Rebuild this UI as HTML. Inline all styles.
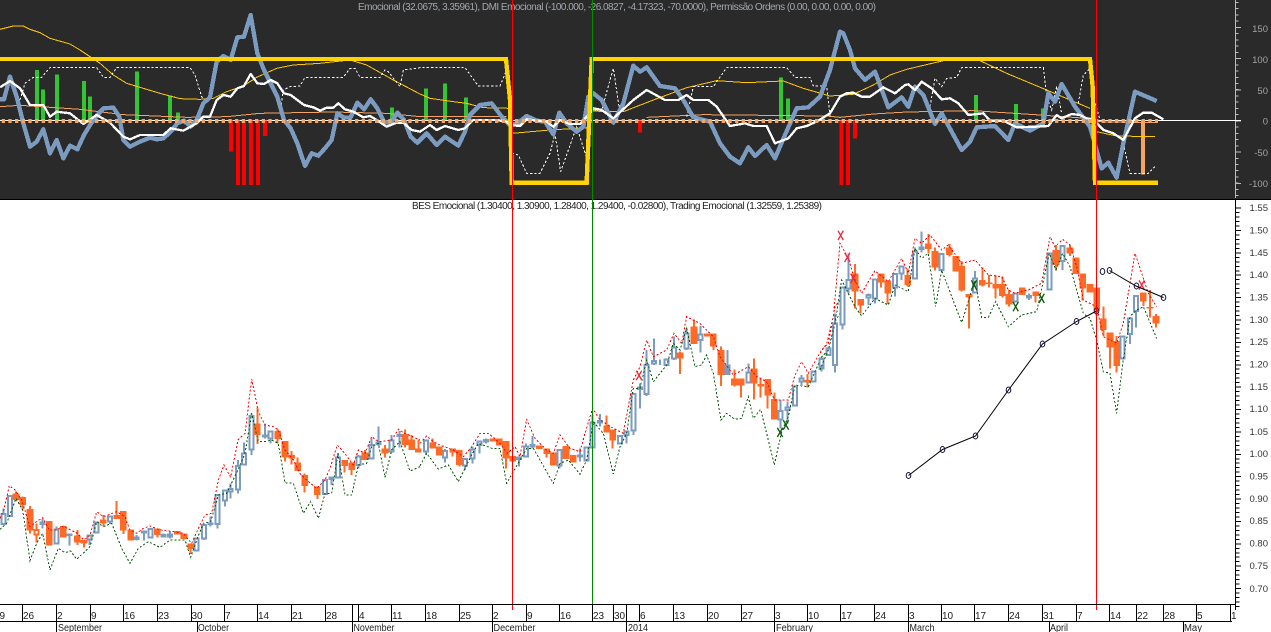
<!DOCTYPE html>
<html><head><meta charset="utf-8"><title>Chart</title>
<style>
html,body{margin:0;padding:0;background:#fff;width:1271px;height:632px;overflow:hidden}
svg{display:block}
text{font-family:"Liberation Sans",sans-serif;font-size:10px}
path{shape-rendering:crispEdges}
.a text{fill:#a0a4a8;font-size:9.5px}
.l text{fill:#333;font-size:9.5px}
.b text{fill:#222}
.n{fill:none}
</style></head><body>
<svg width="1271" height="632" viewBox="0 0 1271 632" xmlns="http://www.w3.org/2000/svg">
<rect width="1271" height="632" fill="#fff"/>
<rect width="1271" height="199" fill="#2a2a2a"/>
<path d="M0 199.500H1271" stroke="#000" stroke-width="1"/>

<!-- upper axis -->
<path d="M1235.500 0V198" stroke="#bdbdbd"/>
<path d="M1237 2V198" stroke="#bdbdbd" stroke-width="3" stroke-dasharray="1 5.230"/>
<path d="M1238 27V190" stroke="#bdbdbd" stroke-width="6" stroke-dasharray="1 30.170"/>
<path d="M0 120.500H1241" stroke="#fff"/>
<g class="a" text-anchor="end">
<text x="1268" y="32">150</text><text x="1268" y="63">100</text><text x="1268" y="94">50</text><text x="1268" y="124.500">0</text><text x="1268" y="156">-50</text><text x="1268" y="187">-100</text>
</g>
<text x="358" y="10" textLength="518" lengthAdjust="spacing" fill="#a0a8b0">Emocional (32.0675, 3.35961), DMI Emocional (-100.000, -26.0827, -4.17323, -70.0000), Permissão Ordens (0.00, 0.00, 0.00, 0.00)</text>

<!-- upper bars / lines, coordinates at 3x -->
<g transform="scale(.33333)" class="n">
<path stroke="#33c433" stroke-width="11" d="M111 360V210M129 360V268M171 360V223M252 360V243M270 360V290M411 360V214M510 360V286M534 360V338M1176 360V322M1278 360V266M1335 360V250M1398 360V292M2343 360V232M2364 360V295M2928 360V285M3048 360V312M3129 360V325"/>
<path stroke="#ff0000" stroke-width="11" d="M693 362V455M714 362V555M732 362V555M753 362V555M774 362V555M795 362V408M1920 362V397M2524 362V555M2544 362V555M2565 362V415"/>
<path stroke="#f5a35e" stroke-width="12" d="M3429 360V523"/>
<path stroke="#f5a35e" stroke-width="3" d="M0 320L60 316L240 328L370 344L560 352L680 350L780 340L1000 336L1160 340L1260 350L1520 350M1940 352L2110 344L2480 348L2520 352L2620 342L2720 336L2920 332L3120 345L3260 355M3290 365L3470 368"/>
<path stroke="#ffc800" stroke-width="3" d="M0 88L40 78L70 78L90 88L120 98L150 115L210 132L240 150L270 170L300 190L340 225L380 250L420 262L480 280L540 296L600 298L640 295L680 275L730 258L770 232L830 205L880 195L960 190L1050 180L1100 195L1180 240L1260 282L1290 295L1360 305L1400 310L1450 323L1530 325M1537 400L1650 390L1765 383M1775 333L1830 335L1870 335L1960 300L2060 263L2150 242L2240 248L2350 243L2410 265L2490 288L2560 283L2620 255L2670 225L2720 208L2830 182L2940 182L3020 220L3140 270L3270 325M3290 395L3350 408L3465 410"/>
<path stroke="#fff" stroke-width="3" stroke-dasharray="7 6" d="M60 300L75 250L100 232L125 232L150 203L290 203L310 232L330 232L350 203L570 203L585 225L605 290L610 298M840 340L850 270L870 260L900 258L915 232L1030 232L1050 205L1065 205L1080 232L1140 232L1155 210L1165 215L1200 260L1210 210L1260 203L1395 203L1435 258L1500 258L1522 205L1530 300L1537 460L1555 465L1580 520L1620 520L1650 460L1665 400L1682 515L1730 380L1765 490M1770 330L1805 330L1840 205L1860 340M2060 350L2080 260L2140 260L2180 203L2360 203L2385 232L2430 232L2440 258L2480 258L2490 350M2790 320L2805 235L2825 260L2840 235L2870 232L2885 203L3130 203L3140 290L3155 330L3170 260L3185 340M3235 310L3250 225L3270 205L3280 290L3300 360M3370 430L3390 520L3445 520L3465 500"/>
<path stroke="#7b9bc0" stroke-width="13" stroke-linejoin="round" d="M0 298L12 298L30 230L50 290L70 370L90 440L110 425L130 388L150 460L170 420L190 475L210 437L232 448L252 405L272 372L292 345L310 325L340 323L358 350L370 420L390 440L420 425L450 413L470 418L490 415L512 395L532 370L552 362L572 380L590 360L610 310L630 292L650 185L670 168L692 180L712 112L732 110L752 45L772 160L792 210L812 250L832 290L852 360L872 385L892 430L915 498L935 460L955 467L975 445L995 420L1012 340L1032 353L1052 352L1072 308L1092 328L1112 298L1132 325L1152 365L1172 370L1192 338L1212 360L1232 410L1252 428L1280 400L1310 435L1335 410L1375 437L1395 395L1410 345L1440 315L1475 310L1505 350L1530 375L1550 372L1580 348L1610 362L1635 365L1660 403L1678 338L1700 370L1730 395L1750 380L1765 290L1780 280L1805 300L1840 368L1870 310L1900 197L1920 215L1940 202L1980 258L2025 265L2050 300L2080 352L2130 365L2160 430L2190 470L2220 490L2245 442L2265 468L2300 435L2325 475L2355 405L2390 325L2425 322L2460 290L2490 210L2520 95L2530 100L2550 150L2565 205L2595 240L2625 215L2665 322L2705 292L2725 320L2745 260L2770 285L2805 372L2825 340L2885 450L2910 425L2930 382L2985 378L3025 420L3045 370L3090 392L3130 370L3145 280L3165 305L3185 252L3225 320L3270 380L3305 505L3325 488L3350 533L3370 430L3405 275L3470 303"/>
<path stroke="#fff" stroke-width="7" stroke-linejoin="round" d="M0 262L30 243L60 265L90 315L130 315L150 350L170 335L210 340L250 372L290 345L330 368L370 410L390 418L420 405L490 405L512 385L550 392L590 370L610 350L630 350L650 300L670 285L692 290L712 265L732 258L752 222L772 250L792 252L812 240L832 250L852 280L872 285L912 315L940 322L960 332L980 323L1000 323L1015 310L1035 328L1060 335L1090 352L1110 348L1130 360L1160 380L1190 368L1210 368L1235 390L1260 395L1290 375L1310 390L1335 378L1375 390L1395 385L1420 360L1490 360L1520 365L1530 375L1560 378L1580 358L1640 365L1660 380L1680 360L1710 372L1740 372L1770 340L1780 325L1805 330L1840 355L1900 300L1940 270L1995 300L2035 300L2060 285L2080 300L2125 300L2150 320L2190 378L2235 370L2260 378L2300 378L2325 430L2365 415L2390 385L2420 378L2455 362L2490 340L2520 290L2540 280L2560 278L2585 290L2610 290L2650 262L2685 280L2715 255L2725 253L2745 270L2765 245L2795 265L2825 298L2850 295L2875 310L2905 345L2950 340L2970 362L3010 362L3050 382L3105 380L3145 378L3170 345L3185 355L3215 342L3240 345L3260 355L3280 358L3310 390L3340 400L3370 420L3405 355L3430 338L3455 338L3490 358"/>
<path stroke="#f7a55f" stroke-width="12" stroke-dasharray="10 10" style="shape-rendering:auto" d="M5 363H3474"/>
<path stroke="#ffd200" stroke-width="13" d="M0 177H1518L1530 300L1535 548H1760L1770 300L1775 177H3270L3278 260L3285 548H3474"/>
</g>

<!-- lower axis -->
<path d="M1235.500 200V610" stroke="#000"/>
<path d="M1237.500 207.600V610" stroke="#000" stroke-width="4" stroke-dasharray="1 3.476"/>
<path d="M1238 207.600V610" stroke="#000" stroke-width="6" stroke-dasharray="1 21.380"/>
<g class="l" text-anchor="end">
<text x="1268" y="211">1.55</text><text x="1268" y="233.500">1.50</text><text x="1268" y="256">1.45</text><text x="1268" y="278">1.40</text><text x="1268" y="300.500">1.35</text><text x="1268" y="323">1.30</text><text x="1268" y="345">1.25</text><text x="1268" y="367.500">1.20</text><text x="1268" y="390">1.15</text><text x="1268" y="412">1.10</text><text x="1268" y="435">1.05</text><text x="1268" y="457">1.00</text><text x="1268" y="479.500">0.95</text><text x="1268" y="502">0.90</text><text x="1268" y="524">0.85</text><text x="1268" y="546.500">0.80</text><text x="1268" y="569">0.75</text><text x="1268" y="592">0.70</text>
</g>
<text x="412" y="209" textLength="410" lengthAdjust="spacing" fill="#222">BES Emocional (1.30400, 1.30900, 1.28400, 1.29400, -0.02800), Trading Emocional (1.32559, 1.25389)</text>

<!-- candles 3x -->
<g transform="translate(0,370) scale(.33333)" class="n">
<path stroke="#7b9bc0" stroke-width="6" d="M10 415V465M30 378V438M128 447V475M170 470V520M208 493V527M269 497V525M290 457V487M330 440V462M410 495V512M432 485V512M452 477V503M490 490V503M510 485V505M590 505V542M612 465V510M632 440V470M652 375V475M675 362V410M692 340V385M714 270V370M732 218V283M755 130V255M795 160V205M812 185V220M975 330V372M995 323V345M1014 250V322M1075 255V295M1115 205V265M1136 170V228M1175 195V245M1198 183V232"/>
<path stroke="#7b9bc0" stroke-width="6" fill="#fff" d="M4 432h12v30h-12zM24 378h12v60h-12zM122 458h12v4h-12zM164 478h12v42h-12zM202 493h12v2h-12zM263 497h12v11h-12zM284 457h12v30h-12zM324 440h12v15h-12zM404 503h12v4h-12zM426 485h12v2h-12zM446 477h12v26h-12zM484 495h12v5h-12zM504 493h12v7h-12zM584 505h12v37h-12zM606 465h12v40h-12zM626 460h12v2h-12zM646 375h12v87h-12zM669 362h12v30h-12zM686 357h12v8h-12zM708 288h12v70h-12zM726 250h12v33h-12zM749 138h12v100h-12zM789 197h12v3h-12zM806 185h12v20h-12zM969 330h12v42h-12zM989 323h12v4h-12zM1008 263h12v59h-12zM1069 260h12v25h-12zM1109 225h12v40h-12zM1130 218h12v4h-12zM1169 212h12v33h-12zM1192 195h12v3h-12z"/>
<path stroke="#ff6a26" stroke-width="6" d="M48 365V395M68 380V418M90 408V490M110 460V518M232 480V525M252 510V532M310 435V470M350 393V447M370 423V492M392 478V512M472 475V503M532 483V493M572 520V552M772 112V222M833 175V220M855 213V275M875 243V283M893 263V303M914 310V368M952 350V387M1034 270V308M1055 277V315M1095 240V270M1155 225V262M1215 178V232M1235 195V240M1255 208V248"/>
<path stroke="#ff6a26" stroke-width="20" d="M48 370V390M68 381V405M90 417V482M148 453V527M190 468V503M232 497V517M252 510V520M310 448V460M350 435V447M370 423V482M392 478V512M472 475V495M532 483V493M552 490V507M572 520V537M772 160V195M833 183V207M855 213V262M875 255V265M893 277V303M914 315V348M952 350V375M1034 270V288M1055 277V300M1095 248V270M1155 235V250M1215 192V225M1235 208V240M1255 235V248"/>
<path stroke="#ff6a26" stroke-width="6" fill="#fff" d="M103 480h12v14h-12z"/>
<path stroke="#f00" stroke-width="3" stroke-dasharray="6 6" d="M0 445L12 418L28 347L45 360L65 390L90 470L110 455L128 443L148 480L170 480L190 468L212 480L232 490L252 510L270 495L290 425L310 440L350 425L375 440L390 480L410 490L430 475L450 468L480 480L520 485L550 490L575 520L600 465L615 435L635 430L655 330L672 285L692 322L714 210L735 190L755 27L775 125L795 165L820 170L835 180L855 240L880 270L900 310L920 330L950 355L975 330L990 295L1012 225L1030 245L1060 285L1075 240L1095 250L1115 200L1135 215L1175 210L1195 178L1215 190L1260 210"/>
<path stroke="#0a5a0a" stroke-width="3" stroke-dasharray="6 6" d="M0 478L20 460L48 385L68 420L90 572L110 520L128 490L150 600L175 535L195 548L212 543L230 568L270 530L290 455L310 470L335 460L365 535L390 580L415 535L445 515L480 532L510 510L555 510L572 562L592 505L610 460L632 455L655 375L680 370L714 300L735 250L755 130L775 215L795 215L815 210L835 220L855 338L880 340L910 430L932 395L955 445L975 370L995 370L1014 250L1035 375L1055 375L1075 285L1100 280L1115 230L1135 220L1155 322L1175 240L1200 215L1230 303L1260 290"/>
</g>

<g transform="translate(420,300) scale(.33333)" class="n">
<path stroke="#7b9bc0" stroke-width="6" d="M18 422V465M75 447V488M135 477V510M158 440V490M178 425V460M198 415V430M297 473V500M318 430V470M338 408V445M418 450V505M480 445V485M500 443V482M518 345V442M540 342V380M600 408V430M620 395V430M640 282V405M660 250V325M680 150V288M702 115V195M720 178V195M762 110V180M800 85V150M842 78V157M922 150V225M985 190V247M1082 300V385M1102 305V370M1125 260V317M1145 225V255M1205 175V215M1225 140V165M1245 40V218"/>
<path stroke="#7b9bc0" stroke-width="6" fill="#fff" d="M12 422h12v33h-12zM69 453h12v20h-12zM129 477h12v20h-12zM152 448h12v27h-12zM172 425h12v10h-12zM192 420h12v5h-12zM291 473h12v4h-12zM312 440h12v30h-12zM332 435h12v5h-12zM412 450h12v47h-12zM474 466h12v4h-12zM494 443h12v39h-12zM512 367h12v75h-12zM534 363h12v4h-12zM594 408h12v22h-12zM614 395h12v10h-12zM634 282h12v110h-12zM654 263h12v4h-12zM674 195h12v87h-12zM696 183h12v7h-12zM734 178h12v17h-12zM756 143h12v32h-12zM794 100h12v45h-12zM836 103h12v17h-12zM979 218h12v29h-12zM1076 333h12v25h-12zM1096 323h12v7h-12zM1119 260h12v57h-12zM1139 235h12v10h-12zM1174 215h12v30h-12zM1199 175h12v30h-12zM1219 147h12v18h-12zM1239 70h12v125h-12z"/>
<path stroke="#7b9bc0" stroke-width="20" d="M922 193V225"/>
<path stroke="#ff6a26" stroke-width="6" d="M38 415V445M98 445V470M118 450V500M258 423V505M380 445V472M400 458V497M560 347V398M578 388V445M780 155V222M822 58V132M880 100V150M903 140V258M943 208V260M963 235V292M1002 175V298M1022 232V292M1043 237V325M1063 277V358M1163 222V262"/>
<path stroke="#ff6a26" stroke-width="20" d="M38 428V445M58 440V467M98 445V458M118 450V495M218 415V425M238 415V437M258 423V475M278 468V485M358 437V447M380 445V462M400 458V497M438 438V477M460 465V488M560 377V398M578 388V422M780 157V175M822 80V132M862 100V110M880 100V140M903 150V225M943 235V257M963 235V257M1002 205V250M1022 252V260M1043 237V287M1063 297V358M1163 240V247"/>
<path stroke="#f00" stroke-width="3" stroke-dasharray="6 6" d="M0 430L20 408L40 425L60 435L100 450L130 470L155 440L180 400L205 400L240 430L262 460L285 440L300 470L320 358L345 415L380 450L400 460L420 405L450 445L480 455L495 400L518 325L540 360L580 385L610 400L640 240L660 200L680 120L700 170L740 150L762 100L785 130L800 50L840 70L880 110L900 170L940 225L985 200L1010 230L1040 245L1063 300L1105 300L1125 225L1145 185L1165 220L1205 150L1225 130L1245 20L1260 0"/>
<path stroke="#0a5a0a" stroke-width="3" stroke-dasharray="6 6" d="M0 497L20 460L55 507L85 495L115 545L155 465L175 430L215 445L240 445L260 550L300 480L320 445L340 445L400 550L420 490L445 480L480 523L500 480L520 365L550 400L580 522L600 440L620 400L640 265L660 265L680 180L700 245L740 195L760 130L780 150L800 85L825 200L845 195L860 165L880 220L903 360L920 340L945 358L965 355L985 290L1000 355L1022 328L1040 400L1063 495L1085 395L1105 350L1125 255L1165 260L1205 170L1225 150L1245 65L1260 40"/>
<path stroke="#f0283c" stroke-width="4" d="M649 212L665 240M665 212L649 240" style="shape-rendering:auto"/>
<path stroke="#0a5a0a" stroke-width="4" d="M1072 383L1088 411M1088 383L1072 411M1090 361L1106 389M1106 361L1090 389" style="shape-rendering:auto"/>
</g>

<g transform="translate(820,210) scale(.33333)" class="n">
<path stroke="#7b9bc0" stroke-width="6" d="M5 447V485M25 415V435M45 325V487M67 232V358M85 130V250M145 250V285M165 208V280M225 192V260M245 170V210M285 112V205M305 65V128M365 132V180M465 183V248M587 250V275M627 250V270M688 130V240M728 108V180M908 380V445M930 325V402M948 258V352"/>
<path stroke="#7b9bc0" stroke-width="6" fill="#fff" d="M-1 447h12v23h-12zM19 415h12v20h-12zM39 340h12v125h-12zM61 232h12v111h-12zM79 210h12v25h-12zM139 255h12v7h-12zM159 208h12v57h-12zM219 192h12v40h-12zM239 170h12v20h-12zM279 125h12v80h-12zM299 113h12v4h-12zM359 132h12v48h-12zM459 205h12v43h-12zM581 250h12v25h-12zM621 258h12v5h-12zM682 130h12v108h-12zM722 108h12v45h-12zM902 380h12v65h-12zM924 325h12v47h-12zM942 258h12v45h-12z"/>
<path stroke="#ff6a26" stroke-width="6" d="M105 162V295M122 267V310M183 190V232M203 212V282M263 175V230M325 72V130M345 112V182M388 102V140M408 138V185M425 153V245M447 252V355M487 172V230M507 195V232M527 195V265M547 200V262M567 240V290M607 232V255M647 245V278M708 105V182M750 105V138M768 142V192M788 190V272M810 222V248M830 232V318M850 290V380M870 367V475M890 378V488M970 248V288M990 240V322M1008 312V352"/>
<path stroke="#ff6a26" stroke-width="20" d="M105 190V245M122 267V287M183 190V218M203 212V250M263 195V225M325 100V117M345 123V172M388 112V135M408 138V185M425 168V242M447 252V263M487 210V227M507 217V222M527 222V235M547 222V258M567 252V283M607 232V255M647 245V258M708 120V165M750 112V130M768 142V192M788 190V235M810 222V248M830 232V302M850 325V360M870 367V413M890 393V468M970 248V275M990 291V295M1008 318V340"/>
<path stroke="#f00" stroke-width="3" stroke-dasharray="6 6" d="M0 430L20 400L40 320L60 100L85 145L105 210L125 250L145 215L165 182L205 215L225 180L245 145L265 190L285 85L305 100L330 75L365 120L385 105L425 160L465 150L505 195L545 200L565 240L585 250L625 240L665 220L690 80L705 110L728 88L750 105L770 170L790 270L830 290L850 380L890 400L910 340L945 130L965 190L985 250L1010 290"/>
<path stroke="#0a5a0a" stroke-width="3" stroke-dasharray="6 6" d="M0 480L25 420L45 340L65 210L85 250L105 290L125 318L165 265L205 285L225 225L265 245L285 115L305 145L325 130L347 290L365 180L425 338L465 210L485 322L505 322L527 275L565 350L605 315L650 305L688 130L708 180L728 130L750 170L770 240L790 310L810 325L830 390L850 485L870 490L890 610L910 450L930 320L950 300L970 290L1010 385"/>
<path stroke="#f0283c" stroke-width="4" style="shape-rendering:auto" d="M54 62L70 90M70 62L54 90M74 128L90 156M90 128L74 156M92 191L108 219M108 191L92 219M957 211L973 239M973 211L957 239"/>
<path stroke="#0a5a0a" stroke-width="4" style="shape-rendering:auto" d="M454 211L470 239M470 211L454 239M579 276L595 304M595 276L579 304M657 251L673 279M673 251L657 279"/>
</g>

<!-- black trading line -->
<g class="n" stroke="#000">
<path style="shape-rendering:auto" d="M908.500 475.500L942.500 449.500L975.500 436L1008.500 390L1042.500 344L1076.500 321.500L1096.500 311M1109.500 270.500L1136 286L1163.500 297.500"/>
<g stroke-width="1" stroke="#14143c">
<ellipse cx="908.500" cy="475.500" rx="2.300" ry="3"/><ellipse cx="942.500" cy="449.500" rx="2.300" ry="3"/><ellipse cx="975.500" cy="436" rx="2.300" ry="3"/><ellipse cx="1008.500" cy="390" rx="2.300" ry="3"/><ellipse cx="1042.500" cy="344" rx="2.300" ry="3"/><ellipse cx="1076.500" cy="321.500" rx="2.300" ry="3"/><ellipse cx="1096.500" cy="311" rx="2.300" ry="3"/><ellipse cx="1102.500" cy="271.500" rx="2.300" ry="3"/><ellipse cx="1109.500" cy="270.500" rx="2.300" ry="3"/><ellipse cx="1136.500" cy="286" rx="2.300" ry="3"/><ellipse cx="1163.500" cy="297.500" rx="2.300" ry="3"/>
</g></g>

<!-- vertical markers -->
<path d="M512.500 0V610M1096.500 0V610" stroke="#f00"/>
<path d="M592.500 0V610" stroke="#008a00"/>

<!-- date axis -->
<path d="M0 604.500H1235M0 621.500H1232" stroke="#000"/>
<path stroke="#000" d="M22.500 604V621M56.500 604V621M90.500 604V621M123.500 604V621M157.500 604V621M191.500 604V621M224.500 604V621M257.500 604V621M291.500 604V621M325.500 604V621M352.500 604V621M358.500 604V621M391.500 604V621M425.500 604V621M459.500 604V621M492.500 604V621M526.500 604V621M559.500 604V621M592.500 604V621M613.500 604V621M626.500 604V621M639.500 604V621M673.500 604V621M707.500 604V621M741.500 604V621M774.500 604V621M807.500 604V621M840.500 604V621M874.500 604V621M908.500 604V621M941.500 604V621M974.500 604V621M1008.500 604V621M1042.500 604V621M1076.500 604V621M1109.500 604V621M1136.500 604V621M1163.500 604V621M1196.500 604V621M1230.500 604V621M56.500 621V632M197.500 621V632M352.500 621V632M492.500 621V632M626.500 621V632M774.500 621V632M908.500 621V632M1049.500 621V632M1183.500 621V632"/>
<g class="b">
<text x="-6" y="619">19</text><text x="23" y="619">26</text><text x="57" y="619">2</text><text x="91" y="619">9</text><text x="124" y="619">16</text><text x="158" y="619">23</text><text x="191.500" y="619">30</text><text x="225" y="619">7</text><text x="258" y="619">14</text><text x="292" y="619">21</text><text x="326" y="619">28</text><text x="359" y="619">4</text><text x="392" y="619">11</text><text x="426" y="619">18</text><text x="460" y="619">25</text><text x="493" y="619">2</text><text x="527" y="619">9</text><text x="560" y="619">16</text><text x="593" y="619">23</text><text x="614" y="619">30</text><text x="640" y="619">6</text><text x="674" y="619">13</text><text x="708" y="619">20</text><text x="742" y="619">27</text><text x="775" y="619">3</text><text x="808" y="619">10</text><text x="841" y="619">17</text><text x="875" y="619">24</text><text x="909" y="619">3</text><text x="942" y="619">10</text><text x="975" y="619">17</text><text x="1009" y="619">24</text><text x="1043" y="619">31</text><text x="1077" y="619">7</text><text x="1110" y="619">14</text><text x="1137" y="619">22</text><text x="1164" y="619">28</text><text x="1197" y="619">5</text><text x="1231" y="619">1</text>
<text x="58" y="631" textLength="44" lengthAdjust="spacingAndGlyphs">September</text><text x="198" y="631" textLength="31" lengthAdjust="spacingAndGlyphs">October</text><text x="353.500" y="631" textLength="41" lengthAdjust="spacingAndGlyphs">November</text><text x="493.500" y="631" textLength="42" lengthAdjust="spacingAndGlyphs">December</text><text x="628" y="631" textLength="20" lengthAdjust="spacingAndGlyphs">2014</text><text x="776" y="631" textLength="37" lengthAdjust="spacingAndGlyphs">February</text><text x="909.500" y="631" textLength="25" lengthAdjust="spacingAndGlyphs">March</text><text x="1050" y="631" textLength="18" lengthAdjust="spacingAndGlyphs">April</text><text x="1184" y="631" textLength="18" lengthAdjust="spacingAndGlyphs">May</text>
</g>
</svg>
</body></html>
